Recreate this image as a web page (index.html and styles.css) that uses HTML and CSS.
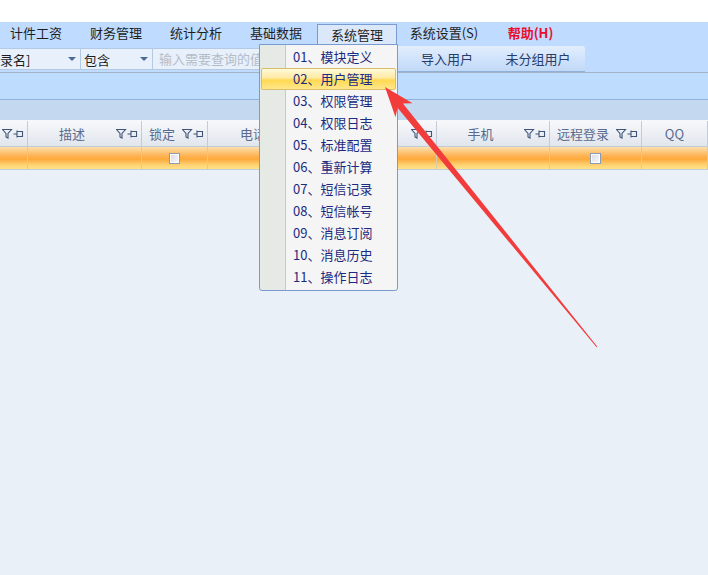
FILE: index.html
```html
<!DOCTYPE html>
<html lang="zh-CN">
<head>
  <meta charset="UTF-8">
  <title>系统管理 - 用户管理</title>
  <link rel="stylesheet" href="styles.css">
</head>
<body>

  <div class="titlegap"></div>

  <!-- Main menu -->
  <nav class="menubar">
    <div class="menu-item first">计件工资</div>
    <div class="menu-item">财务管理</div>
    <div class="menu-item">统计分析</div>
    <div class="menu-item">基础数据</div>
    <div class="menu-item active">系统管理</div>
    <div class="menu-item wide">系统设置(S)</div>
    <div class="menu-item help">帮助(H)</div>
  </nav>

  <!-- Search toolbar -->
  <div class="toolbar">
    <div class="combo field"><span>录名]</span><i class="caret"></i></div>
    <div class="combo op"><span>包含</span><i class="caret"></i></div>
    <div class="search">输入需要查询的值</div>
    <div class="btn-group">
      <div class="tbtn b1"></div>
      <div class="tbtn b2">导入用户</div>
      <div class="tbtn b3">未分组用户</div>
    </div>
  </div>

  <div class="band"></div>
  <div class="groupbar"></div>

  <!-- Grid -->
  <div class="grid">
    <div class="grid-head">
      <div class="hcell"><span class="label"></span><svg class="hicons" viewBox="0 0 22 11"><path d="M0.5 1.5H9.5L6 5.5V10L4 9V5.5Z"/><path d="M11.5 6H15M15 2.5V9.5M15 3.5H20.5V8.5H15"/></svg></div>
      <div class="hcell"><span class="label">描述</span><svg class="hicons" viewBox="0 0 22 11"><path d="M0.5 1.5H9.5L6 5.5V10L4 9V5.5Z"/><path d="M11.5 6H15M15 2.5V9.5M15 3.5H20.5V8.5H15"/></svg></div>
      <div class="hcell"><span class="label">锁定</span><svg class="hicons" viewBox="0 0 22 11"><path d="M0.5 1.5H9.5L6 5.5V10L4 9V5.5Z"/><path d="M11.5 6H15M15 2.5V9.5M15 3.5H20.5V8.5H15"/></svg></div>
      <div class="hcell"><span class="label">电话</span><svg class="hicons" viewBox="0 0 22 11"><path d="M0.5 1.5H9.5L6 5.5V10L4 9V5.5Z"/><path d="M11.5 6H15M15 2.5V9.5M15 3.5H20.5V8.5H15"/></svg></div>
      <div class="hcell"><span class="label"></span><svg class="hicons" viewBox="0 0 22 11"><path d="M0.5 1.5H9.5L6 5.5V10L4 9V5.5Z"/><path d="M11.5 6H15M15 2.5V9.5M15 3.5H20.5V8.5H15"/></svg></div>
      <div class="hcell"><span class="label">手机</span><svg class="hicons" viewBox="0 0 22 11"><path d="M0.5 1.5H9.5L6 5.5V10L4 9V5.5Z"/><path d="M11.5 6H15M15 2.5V9.5M15 3.5H20.5V8.5H15"/></svg></div>
      <div class="hcell"><span class="label">远程登录</span><svg class="hicons" viewBox="0 0 22 11"><path d="M0.5 1.5H9.5L6 5.5V10L4 9V5.5Z"/><path d="M11.5 6H15M15 2.5V9.5M15 3.5H20.5V8.5H15"/></svg></div>
      <div class="hcell"><span class="label">QQ</span></div>
    </div>
    <div class="grid-row">
      <div class="cell"></div>
      <div class="cell"></div>
      <div class="cell"><i class="check"></i></div>
      <div class="cell"></div>
      <div class="cell"></div>
      <div class="cell"></div>
      <div class="cell"><i class="check"></i></div>
      <div class="cell"></div>
    </div>
  </div>

  <!-- Open dropdown of 系统管理 -->
  <div class="dropdown">
    <div class="dd-item">01、模块定义</div>
    <div class="dd-item hover">02、用户管理</div>
    <div class="dd-item">03、权限管理</div>
    <div class="dd-item">04、权限日志</div>
    <div class="dd-item">05、标准配置</div>
    <div class="dd-item">06、重新计算</div>
    <div class="dd-item">07、短信记录</div>
    <div class="dd-item">08、短信帐号</div>
    <div class="dd-item">09、消息订阅</div>
    <div class="dd-item">10、消息历史</div>
    <div class="dd-item">11、操作日志</div>
  </div>

  <!-- Red annotation arrow -->
  <svg class="arrow" viewBox="0 0 708 575">
    <polygon points="385,87 412.5,103.3 402.9,103.4 597.4,346.7 596.6,347.3 397.5,107.8 395.5,117.3"/>
  </svg>

</body>
</html>
```

FILE: styles.css
```css
body {
  margin: 0;
  font-family: "Noto Sans CJK SC", "Microsoft YaHei", sans-serif;
  font-size: 13px;
  background-color: #e9f0f8;
  height: 575px;
  overflow: hidden;
  position: relative;
}

.titlegap {
  height: 22px;
  background-color: #ffffff;
}

/* Main menu */
.menubar {
  display: flex;
  height: 23px;
  background-color: #bfdbff;
  color: #1e1e1e;
}

.menu-item {
  width: 80px;
  line-height: 22px;
  text-align: center;
  box-sizing: border-box;
}

.menu-item.first {
  margin-left: -4px;
}

.menu-item.active {
  margin-left: 1px;
  margin-top: 2px;
  line-height: 19px;
  background-color: #dbe8f9;
  border: 1px solid #7a9bcf;
  border-bottom: none;
}

.menu-item.wide {
  width: 94px;
}

.menu-item.help {
  width: 79px;
  color: #e8102a;
  font-weight: bold;
}

/* Search toolbar */
.toolbar {
  display: flex;
  height: 27px;
  background-color: #bfdbff;
  border-bottom: 1px solid #a4b2c6;
}

.combo {
  display: flex;
  align-items: center;
  height: 22px;
  margin-top: 3px;
  box-sizing: border-box;
  background-color: #e7f0fb;
  border: 1px solid #b3c9e4;
  border-left: none;
  color: #1e1e1e;
  position: relative;
}

.combo span {
  padding-left: 3px;
}

.combo.field {
  width: 81px;
}

.combo.field span {
  padding-left: 0;
}

.combo.op {
  width: 72px;
}

.caret {
  position: absolute;
  right: 4px;
  top: 8px;
  width: 0;
  height: 0;
  border-left: 4px solid transparent;
  border-right: 4px solid transparent;
  border-top: 4px solid #4d6b99;
}

.search {
  width: 177px;
  height: 22px;
  margin-top: 3px;
  box-sizing: border-box;
  padding-left: 6px;
  line-height: 20px;
  background-color: #e7f0fb;
  border: 1px solid #b3c9e4;
  border-left: none;
  color: #b4bcc8;
}

.btn-group {
  display: flex;
  margin-top: 1px;
  padding-right: 6px;
  background: linear-gradient(#e3eefd, #cde1fb 60%, #c2d9f6);
  border-bottom: 1px solid #8fb0d8;
  border-radius: 3px 3px 0 0;
}

.tbtn {
  line-height: 25px;
  text-align: center;
  color: #2a3c6a;
}

.tbtn.b1 { width: 67px; }
.tbtn.b2 { width: 100px; }
.tbtn.b3 { width: 82px; }

.band {
  height: 26px;
  background-color: #bedcfe;
  border-bottom: 1px solid #8fb1de;
}

.groupbar {
  height: 20px;
  background-color: #c4d9ef;
}

/* Grid */
.grid-head,
.grid-row {
  display: grid;
  grid-template-columns: 28px 114px 66px 116px 113px 113px 92px 1fr;
}

.grid-head {
  height: 25px;
  border-top: 1px solid #f4f7fb;
  border-bottom: 1px solid #c2cad6;
  background: linear-gradient(#f7f8fa, #e1e6ee);
  color: #5a6a8c;
}

.hcell {
  display: flex;
  align-items: center;
  border-right: 1px solid #c3cbd8;
  overflow: hidden;
}

.hcell .label {
  flex: 1;
  text-align: center;
  white-space: nowrap;
}

.hicons {
  width: 22px;
  height: 11px;
  margin-right: 3px;
  fill: none;
  stroke: #3f5479;
  stroke-width: 1.1;
}

.grid-row {
  height: 22px;
  border-bottom: 1px solid #c5ccd8;
  background: linear-gradient(#fee0ae, #fdb354 40%, #fda93a 55%, #fed070 80%, #ffe48a);
}

.cell {
  display: flex;
  align-items: center;
  justify-content: center;
  border-right: 1px solid #d5c9ae;
}

.check {
  width: 9px;
  height: 9px;
  border: 1px solid #8b9bb3;
  background: linear-gradient(135deg, #d8dce2, #f8f9fb);
  box-shadow: inset 0 0 0 1px #ffffff;
}

/* Dropdown */
.dropdown {
  position: absolute;
  left: 259px;
  top: 44px;
  width: 137px;
  padding: 1px 0 2px;
  background: linear-gradient(to right, #e5eae5 25px, #c6c9c6 25px, #c6c9c6 26px, #f5f5f5 26px);
  border: 1px solid #7a9bcf;
  border-radius: 0 0 3px 3px;
  z-index: 5;
}

.dd-item {
  height: 22px;
  line-height: 22px;
  margin: 0 1px;
  padding-left: 32px;
  color: #1b2a80;
  box-sizing: border-box;
}

.dd-item.hover {
  border: 1px solid #dcbc6c;
  border-radius: 2px;
  line-height: 20px;
  padding-left: 31px;
  background: linear-gradient(#fff9dc, #ffeaa0 45%, #ffd952 55%, #ffe78a);
}

.arrow {
  position: absolute;
  left: 0;
  top: 0;
  width: 708px;
  height: 575px;
  fill: #f23c3c;
  z-index: 10;
  pointer-events: none;
}
```
